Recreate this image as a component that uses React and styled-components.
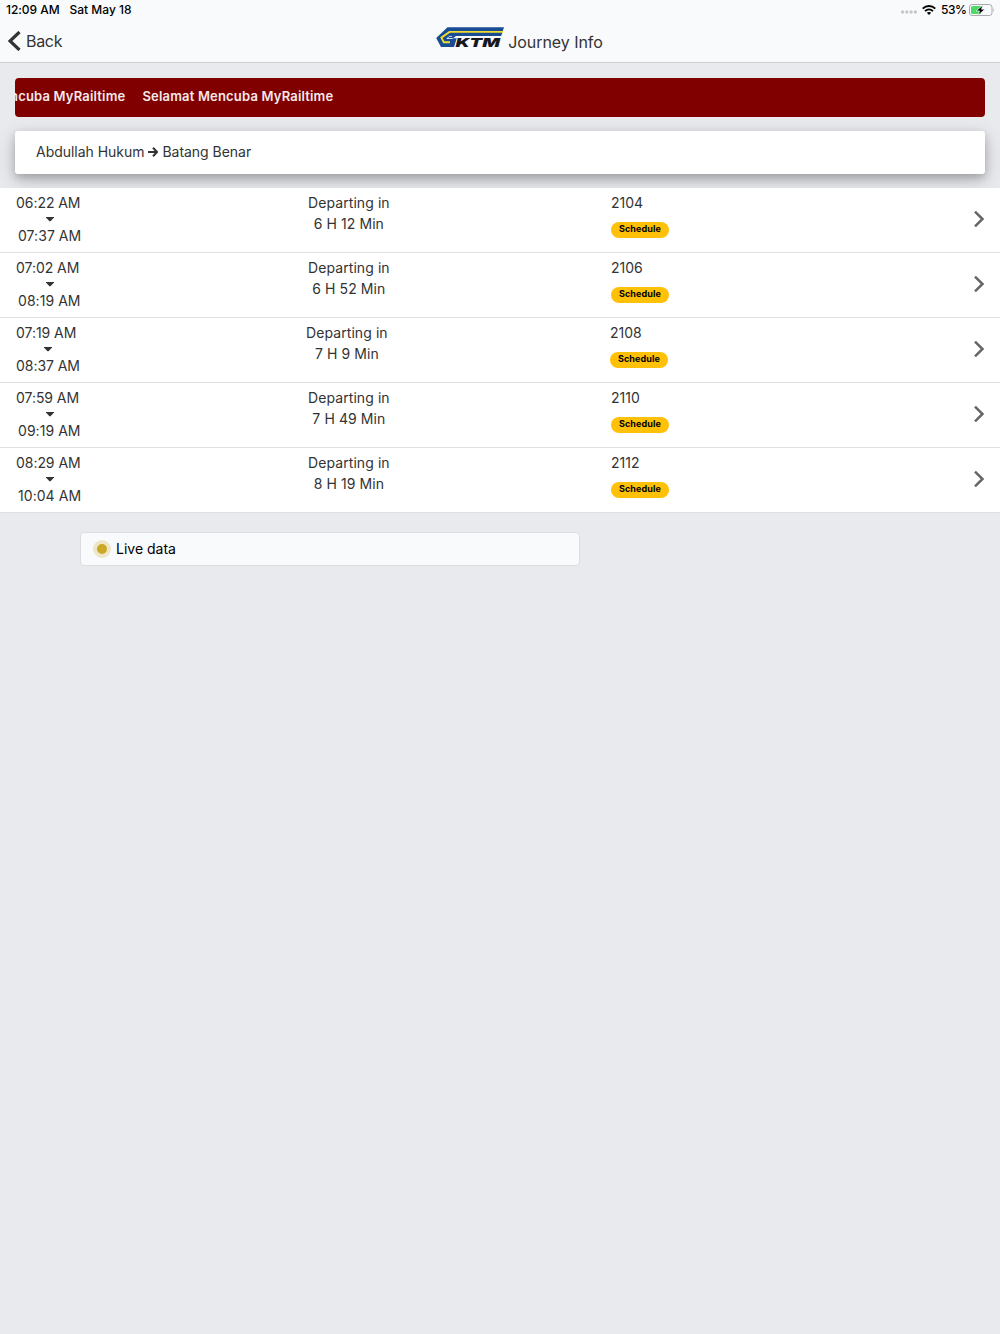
import React from 'react';
import styled, { createGlobalStyle } from 'styled-components';

const GlobalStyle = createGlobalStyle`
  * {
    box-sizing: border-box;
  }

  body {
    margin: 0;
    background: #e9eaee;
    color: #333;
    font-family: Inter, 'Liberation Sans', sans-serif;
    font-size: 14px;
  }
`;

const JOURNEYS = [
  { departs: '06:22 AM', arrives: '07:37 AM', wait: '6 H 12 Min', train: '2104' },
  { departs: '07:02 AM', arrives: '08:19 AM', wait: '6 H 52 Min', train: '2106' },
  { departs: '07:19 AM', arrives: '08:37 AM', wait: '7 H 9 Min', train: '2108', narrow: true },
  { departs: '07:59 AM', arrives: '09:19 AM', wait: '7 H 49 Min', train: '2110' },
  { departs: '08:29 AM', arrives: '10:04 AM', wait: '8 H 19 Min', train: '2112' },
];

const Page = styled.div`
  min-height: 1334px;
  overflow: hidden;
`;

const Header = styled.header`
  height: 63px;
  background: #f9fafc;
  border-bottom: 1px solid #cdced1;
`;

const StatusBar = styled.div`
  display: flex;
  align-items: center;
  height: 19px;
  padding: 0 5px 0 6px;
  color: #000;
  font-size: 12px;
  font-weight: 500;
  white-space: nowrap;
`;

const Clock = styled.span`
  width: 63.5px;
  letter-spacing: -0.05px;
`;

const StatusIcons = styled.div`
  display: flex;
  align-items: center;
  margin-left: auto;
`;

const Percent = styled.span`
  width: 28px;
  letter-spacing: -0.5px;
`;

const NavBar = styled.nav`
  display: grid;
  grid-template-columns: 1fr auto 1fr;
  height: 42px;
`;

const BackButton = styled.a`
  display: flex;
  align-items: center;
  height: 43px;
  padding-left: 8px;
  gap: 5px;
  color: #333;
  font-size: 16px;
  letter-spacing: -0.3px;
`;

const Title = styled.h1`
  display: flex;
  align-items: center;
  height: 42px;
  margin: 0;
  padding-left: 39px;
  gap: 3px;
  font-size: 16px;
  font-weight: 400;
`;

const TitleText = styled.span`
  padding-top: 3px;
  letter-spacing: -0.05px;
  white-space: nowrap;
`;

const Ticker = styled.div`
  display: flex;
  align-items: center;
  justify-content: flex-start;
  height: 39px;
  margin: 14.5px 15px 14.5px;
  padding-bottom: 2px;
  overflow: hidden;
  border-radius: 4px;
  background: #800000;
  color: #f3e9e9;
  font-size: 13px;
  font-weight: 600;
`;

const TickerText = styled.span`
  flex: none;
  margin-right: 17px;
  letter-spacing: 0.18px;

  &:first-child {
    margin-left: -80.5px;
  }
`;

const RouteCard = styled.div`
  display: flex;
  align-items: center;
  height: 43px;
  margin: 0 15px 14px;
  padding: 0 21px 2px;
  gap: 4px;
  border-radius: 3px;
  background: #fff;
  letter-spacing: -0.03px;
  box-shadow: 0 4px 8px rgba(0, 0, 0, 0.2), 0 6px 20px rgba(0, 0, 0, 0.19);
`;

const List = styled.ul`
  position: relative;
  margin: 0;
  padding: 0;
  list-style: none;
  background: #fff;
`;

const Row = styled.li`
  display: grid;
  grid-template-columns: ${({ $narrow }) => ($narrow ? '290px 304px' : '292px 303px')} 1fr 12px;
  height: 65px;
  padding: 0 15px 0 16px;
  border-bottom: 1px solid #dedfe0;
  line-height: 20px;
`;

const Times = styled.div`
  display: flex;
  flex-direction: column;
  align-items: flex-start;
  padding-top: 5px;
`;

const Time = styled.span`
  letter-spacing: ${({ $indent }) => ($indent ? '0.05px' : '-0.05px')};
  line-height: 20px;
  padding-left: ${({ $indent }) => ($indent ? '2px' : '0')};
`;

const Caret = styled.svg`
  margin-left: ${({ $narrow }) => ($narrow ? '28px' : '30px')};
`;

const Wait = styled.div`
  justify-self: start;
  padding-top: 5px;
  letter-spacing: 0.08px;
  line-height: 20.5px;
  text-align: center;
`;

const Train = styled.div`
  padding-top: 5px;
`;

const Badge = styled.span`
  display: flex;
  align-items: center;
  justify-content: center;
  width: 58px;
  height: 16px;
  margin-top: 8.5px;
  padding-bottom: 1px;
  border-radius: 8px;
  background: #ffc107;
  color: #000;
  font-size: 9px;
  font-weight: 700;
  letter-spacing: 0.1px;
`;

const Chevron = styled.svg`
  margin-top: 22px;
`;

const Legend = styled.div`
  display: flex;
  align-items: center;
  width: 500px;
  height: 34px;
  margin: 19px 0 0 80px;
  padding: 0 0 1px 12px;
  gap: 5px;
  border: 1px solid #dcdddf;
  border-radius: 4px;
  background: #f9fafc;
  color: #000;
`;

const LiveDot = styled.span`
  width: 18px;
  height: 18px;
  border: 4px solid #ede6c8;
  border-radius: 50%;
  background: #cca827;
`;

const SignalDots = styled.svg`
  margin: 5px 4px 0 0;
`;

const WifiIcon = styled.svg`
  margin-right: 5px;
`;

const Signal = () => (
  <SignalDots width="18" height="4" viewBox="0 0 18 4" fill="#c6c7c9">
    {[2.5, 6.8, 11.1, 15.4].map((cx) => (
      <circle key={cx} cx={cx} cy="2" r="1.7" />
    ))}
  </SignalDots>
);

const Wifi = () => (
  <WifiIcon width="14" height="10" viewBox="0 0 14 10" fill="none" stroke="#000" strokeWidth="1.9">
    <path d="M.7 3.6C4.3.2 9.7.2 13.3 3.6" />
    <path d="M3 6.1c2.3-2.1 5.7-2.1 8 0" />
    <path d="M4.8 7.7c1.3-1 3.1-1 4.4 0L7 9.9z" fill="#000" stroke="none" />
  </WifiIcon>
);

const Battery = () => (
  <svg width="26" height="12" viewBox="0 0 26 12">
    <rect x=".5" y=".5" width="22.5" height="11" rx="2.5" fill="none" stroke="#a9aaac" />
    <path d="M3.5 2H12v8H3.5Q2 10 2 8.5V3.5Q2 2 3.5 2z" fill="#4cd964" />
    <path d="M24.2 4q1.8 2 0 4z" fill="#a9aaac" />
    <path
      d="M13.8 1.2 7.2 6.9h3.3L9.2 11l6.9-5.8h-3.5z"
      fill="#000"
      stroke="#f9fafc"
      strokeWidth=".7"
    />
  </svg>
);

const LogoSvg = styled.svg`
  margin-top: -5px;
  overflow: visible;
`;

const Logo = () => (
  <LogoSvg width="69" height="22" viewBox="0 0 69 22">
    <path d="M11.5.2H68L65.2 9H20l-3 2.3h4L18 20H5L.2 11z" fill="#1a4c94" />
    <path d="M67 4.9H13.5L5.4 10.6 7.800 15.200H14" fill="none" stroke="#f0dc2a" strokeWidth="1.900" />
    <path d="M16 9.400h-2.500L10.800 11.500h6" fill="none" stroke="#f9fafc" strokeWidth=".8" />
    <text
      x="19.5"
      y="20"
      textLength="44.5"
      lengthAdjust="spacingAndGlyphs"
      fill="#15171b"
      stroke="#f9fafc"
      strokeWidth="1"
      paintOrder="stroke"
      fontFamily="Inter, sans-serif"
      fontSize="12"
      fontStyle="italic"
      fontWeight="900"
    >
      KTM
    </text>
  </LogoSvg>
);

const JourneyRow = ({ departs, arrives, wait, train, narrow }) => (
  <Row $narrow={narrow}>
    <Times>
      <Time>{departs}</Time>
      <Caret $narrow={narrow} width="8" height="13" viewBox="0 0 8 13">
        <path d="M0 4h8v.6L4.5 8.3h-1L0 4.6z" fill="#333" />
      </Caret>
      <Time $indent={!narrow}>{arrives}</Time>
    </Times>
    <Wait>
      <div>Departing in</div>
      <div>{wait}</div>
    </Wait>
    <Train>
      {train}
      <Badge>Schedule</Badge>
    </Train>
    <Chevron width="12" height="18" viewBox="0 0 12 18">
      <path d="M2 1.7l7.5 7.3L2 16.3" fill="none" stroke="#666" strokeWidth="2.5" />
    </Chevron>
  </Row>
);

const App = () => {
  return (
    <Page>
      <GlobalStyle />
      <Header>
        <StatusBar>
          <Clock>12:09 AM</Clock>
          <span>Sat May 18</span>
          <StatusIcons>
            <Signal />
            <Wifi />
            <Percent>53%</Percent>
            <Battery />
          </StatusIcons>
        </StatusBar>
        <NavBar>
          <BackButton>
            <svg width="13" height="20" viewBox="0 0 13 20">
              <path d="M11.5 1 2 10l9.5 9" fill="none" stroke="#333" strokeWidth="3.2" />
            </svg>
            Back
          </BackButton>
          <Title>
            <Logo />
            <TitleText>Journey Info</TitleText>
          </Title>
        </NavBar>
      </Header>
      <Ticker>
        <TickerText>Selamat Mencuba MyRailtime</TickerText>
        <TickerText>Selamat Mencuba MyRailtime</TickerText>
      </Ticker>
      <RouteCard>
        <span>Abdullah Hukum</span>
        <svg width="10" height="10" viewBox="0 0 10 10" fill="none" stroke="#333" strokeWidth="2">
          <path d="M0 5h9M5 .8 9 5 5 9.2" />
        </svg>
        <span>Batang Benar</span>
      </RouteCard>
      <List>
        {JOURNEYS.map((journey) => (
          <JourneyRow key={journey.train} {...journey} />
        ))}
      </List>
      <Legend>
        <LiveDot />
        Live data
      </Legend>
    </Page>
  );
};

export default App;
